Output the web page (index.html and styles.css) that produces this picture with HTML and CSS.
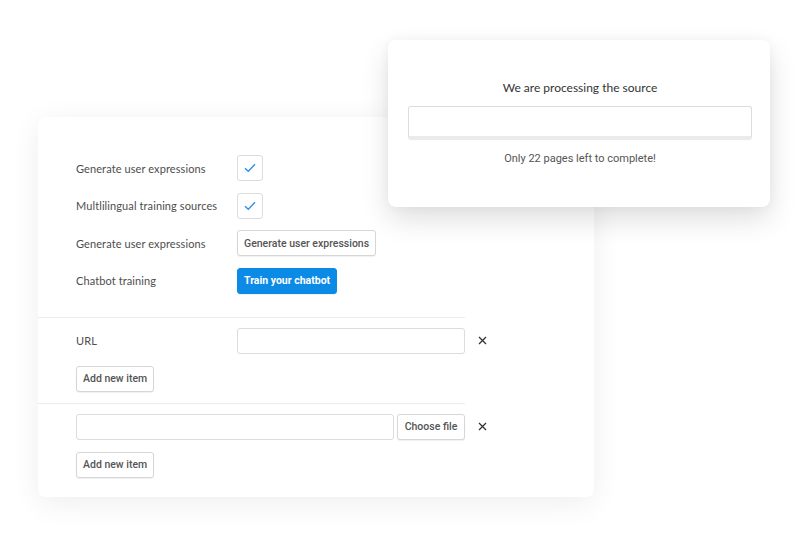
FILE: index.html
```html
<!DOCTYPE html>
<html lang="en">
<head>
    <meta charset="UTF-8">
    <meta name="viewport" content="width=device-width, initial-scale=1.0">
    <title>Chatbot training</title>
    <link rel="stylesheet" href="styles.css">
</head>
<body>
    <div class="stage">
        <div class="card">
            <div class="section settings">
                <div class="row">
                    <span class="label">Generate user expressions</span>
                    <span class="check">
                        <svg width="12" height="10" viewBox="0 0 12 10"><path d="M1 5.2 L4.3 8.3 L11 1.3" fill="none" stroke="#2d8fe3" stroke-width="1.3"/></svg>
                    </span>
                </div>
                <div class="row">
                    <span class="label">Multlilingual training sources</span>
                    <span class="check">
                        <svg width="12" height="10" viewBox="0 0 12 10"><path d="M1 5.2 L4.3 8.3 L11 1.3" fill="none" stroke="#2d8fe3" stroke-width="1.3"/></svg>
                    </span>
                </div>
                <div class="row">
                    <span class="label">Generate user expressions</span>
                    <button class="btn">Generate user expressions</button>
                </div>
                <div class="row">
                    <span class="label">Chatbot training</span>
                    <button class="btn primary">Train your chatbot</button>
                </div>
            </div>

            <div class="section repeater">
                <div class="row">
                    <span class="label">URL</span>
                    <input class="field url" type="text">
                    <span class="remove">
                        <svg width="9" height="9" viewBox="0 0 9 9"><path d="M1 1 L8 8 M8 1 L1 8" stroke="#333" stroke-width="1.3"/></svg>
                    </span>
                </div>
                <button class="btn">Add new item</button>
            </div>

            <div class="section repeater">
                <div class="row">
                    <input class="field file" type="text">
                    <button class="btn choose">Choose file</button>
                    <span class="remove">
                        <svg width="9" height="9" viewBox="0 0 9 9"><path d="M1 1 L8 8 M8 1 L1 8" stroke="#333" stroke-width="1.3"/></svg>
                    </span>
                </div>
                <button class="btn">Add new item</button>
            </div>
        </div>

        <div class="popup">
            <p class="popup-title">We are processing the source</p>
            <div class="progress"></div>
            <p class="popup-note">Only 22 pages left to complete!</p>
        </div>
    </div>
</body>
</html>
```

FILE: styles.css
```css
body {
    margin: 0;
    background-color: #ffffff;
    font-family: 'Lato', 'Open Sans', sans-serif;
    color: #555;
}
.stage {
    position: relative;
    width: 809px;
    height: 535px;
    padding: 117px 0 0 38px;
    box-sizing: border-box;
}
.card {
    width: 556px;
    height: 380px;
    background-color: #ffffff;
    border-radius: 8px;
    box-shadow: 0 6px 30px rgba(0,0,0,0.07);
    box-sizing: border-box;
}
.section {
    display: flex;
    flex-direction: column;
    align-items: flex-start;
    padding: 10px 0 11px 38px;
    gap: 12px;
    width: 427px;
    box-sizing: border-box;
    border-top: 1px solid #ececec;
}
.settings {
    border-top: none;
    padding-top: 38px;
    padding-bottom: 23px;
    gap: 11.5px;
    width: auto;
}
.repeater:last-child {
    padding-bottom: 18px;
}
.row {
    display: flex;
    align-items: center;
    height: 26px;
}
.label {
    width: 161px;
    flex-shrink: 0;
    font-size: 11px;
    color: #4d4d4d;
    letter-spacing: 0.1px;
}
.check {
    width: 24px;
    height: 24px;
    border: 1px solid #dcdcdc;
    border-radius: 3px;
    display: flex;
    align-items: center;
    justify-content: center;
}
.btn {
    height: 26px;
    padding: 0 6px;
    border: 1px solid #d6d6d6;
    border-radius: 3px;
    background-color: #ffffff;
    color: #555;
    font-family: 'Roboto', sans-serif;
    font-size: 10.5px;
    font-weight: 500;
    box-shadow: 0 1px 1px rgba(0,0,0,0.06);
    cursor: pointer;
    flex-shrink: 0;
}
.primary {
    background-color: #0b8ae6;
    border-color: #0b8ae6;
    color: #ffffff;
    font-weight: 700;
    padding: 0 6px;
}
.field {
    height: 26px;
    box-sizing: border-box;
    border: 1px solid #dcdcdc;
    border-radius: 3px;
    background-color: #ffffff;
    flex-shrink: 0;
}
.url {
    width: 228px;
}
.file {
    width: 318px;
    margin-right: 3px;
}
.choose {
    width: 68px;
    padding: 0;
}
.remove {
    display: flex;
    margin-left: 13px;
}
.popup {
    position: absolute;
    left: 388px;
    top: 40px;
    width: 382px;
    height: 167px;
    background-color: #ffffff;
    border-radius: 8px;
    box-shadow: 0 12px 28px rgba(0,0,0,0.13), 0 0 12px rgba(0,0,0,0.04);
    padding: 40px 18px 0 20px;
    box-sizing: border-box;
    text-align: center;
}
.popup-title {
    margin: 0 0 11px;
    font-size: 12px;
    color: #333;
}
.progress {
    height: 34px;
    border: 1px solid #dcdcdc;
    border-bottom: 4px solid #ebebeb;
    border-radius: 3px;
    box-sizing: border-box;
}
.popup-note {
    margin: 12px 0 0;
    font-family: 'Roboto', sans-serif;
    font-size: 11px;
    color: #555;
}
```
